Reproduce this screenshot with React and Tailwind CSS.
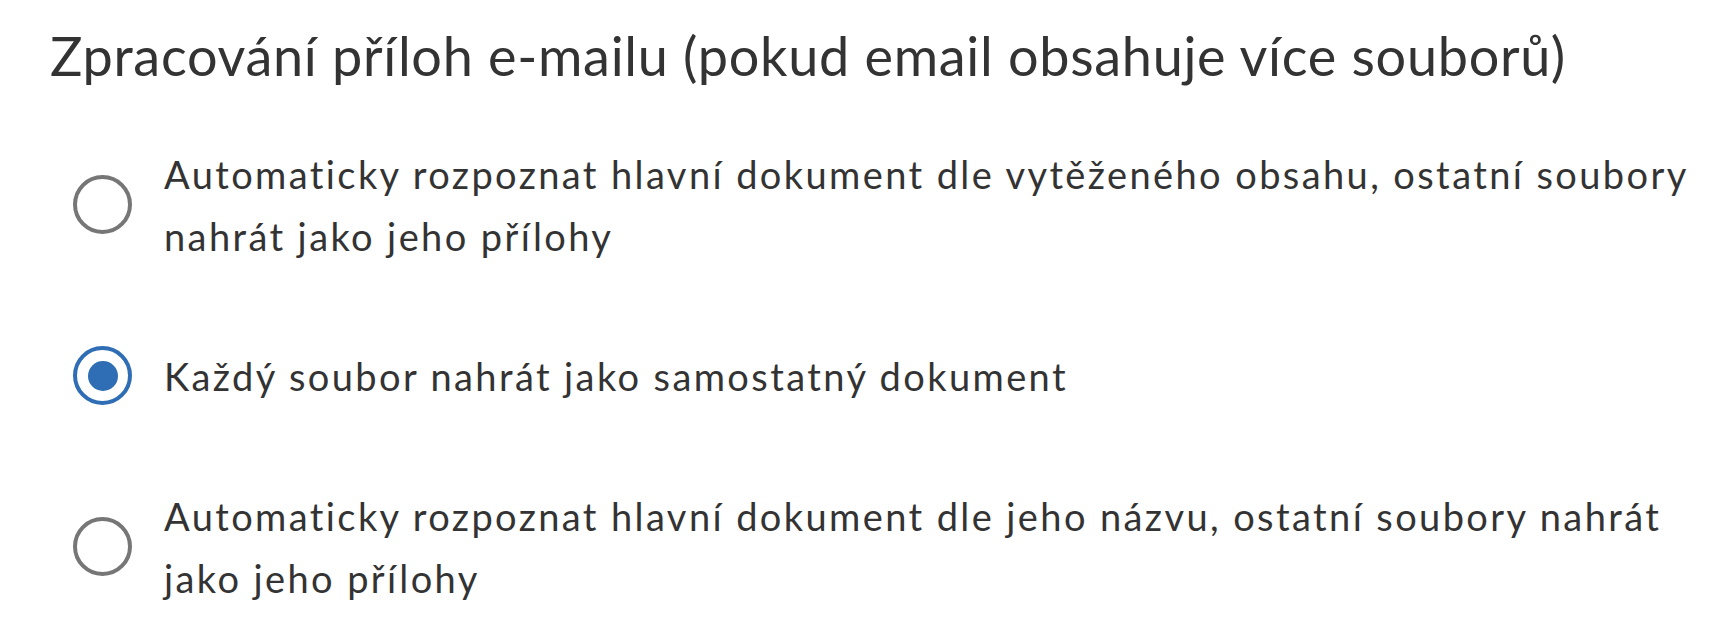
import React from "react";

const options = [
  {
    label:
      "Automaticky rozpoznat hlavní dokument dle vytěženého obsahu, ostatní soubory nahrát jako jeho přílohy",
    checked: false,
  },
  { label: "Každý soubor nahrát jako samostatný dokument", checked: true },
  {
    label:
      "Automaticky rozpoznat hlavní dokument dle jeho názvu, ostatní soubory nahrát jako jeho přílohy",
    checked: false,
  },
];

function Radio({ checked }) {
  return checked ? (
    <span className="flex h-[59px] w-[59px] shrink-0 items-center justify-center rounded-full border-[4px] border-[#2f6db5] bg-white">
      <span className="h-[30px] w-[30px] rounded-full bg-[#2f6db5]" />
    </span>
  ) : (
    <span className="h-[59px] w-[59px] shrink-0 rounded-full border-[4px] border-[#767676] bg-white" />
  );
}

export default function App() {
  return (
    <div
      className="min-h-[643px] w-full bg-white pl-[50px] pr-[10px] pt-[24px] text-[#333333]"
      style={{ fontFamily: "Lato, 'Noto Sans', sans-serif" }}
    >
      <h1 className="text-[54px] font-normal leading-[1.2] tracking-[0.7px]">
        Zpracování příloh e-mailu (pokud email obsahuje více souborů)
      </h1>
      <div className="mt-[54px] flex flex-col gap-[78px] pl-[23px]">
        {options.map((o, i) => (
          <label key={i} className="flex items-center gap-[32px]">
            <Radio checked={o.checked} />
            <span className="flex-1 text-[38px] leading-[62px] tracking-[2.4px]">{o.label}</span>
          </label>
        ))}
      </div>
    </div>
  );
}
